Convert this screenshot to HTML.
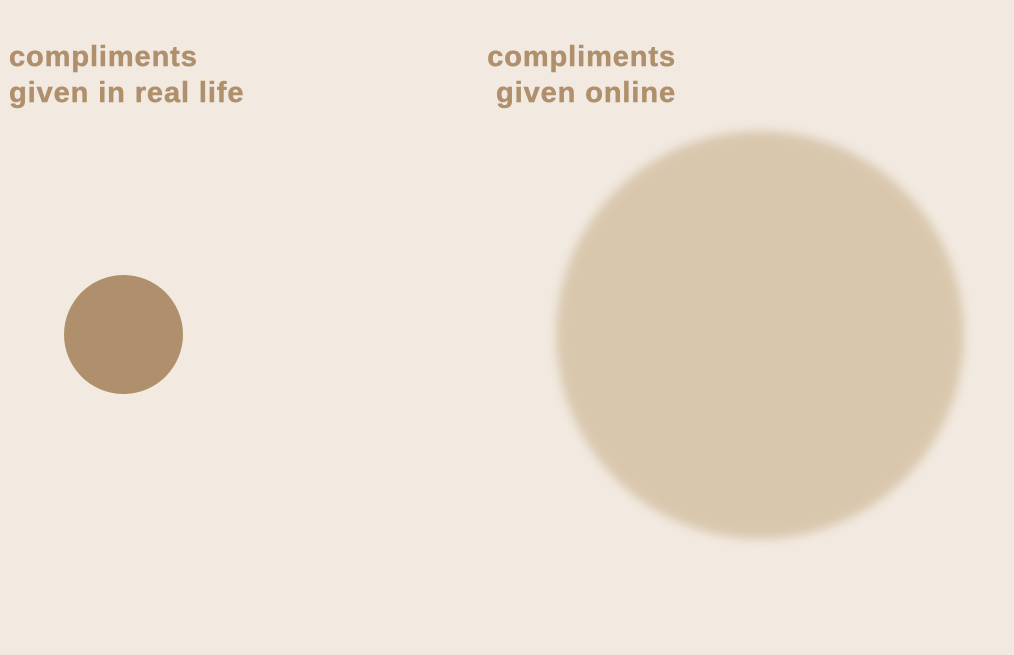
<!DOCTYPE html>
<html><head><style>
html,body{margin:0;padding:0;width:1014px;height:655px;background:#f2eae1;overflow:hidden;position:relative}
.t{position:absolute;font-family:"Liberation Sans",sans-serif;font-weight:bold;font-size:29px;line-height:36px;color:#b0906c;letter-spacing:0.9px;-webkit-text-stroke:0.5px #b0906c}
.c{position:absolute;border-radius:50%}
</style></head><body>
<div class="t" style="left:9px;top:39px">compliments<br>given in real life</div>
<div class="t" style="right:338px;top:39px;text-align:right">compliments<br>given online</div>
<div class="c" style="left:64px;top:275px;width:119px;height:119px;background:#b0906c"></div>
<div class="c" style="left:556px;top:131px;width:408px;height:408px;background:#d9c7ad;filter:blur(5px)"></div>
</body></html>
